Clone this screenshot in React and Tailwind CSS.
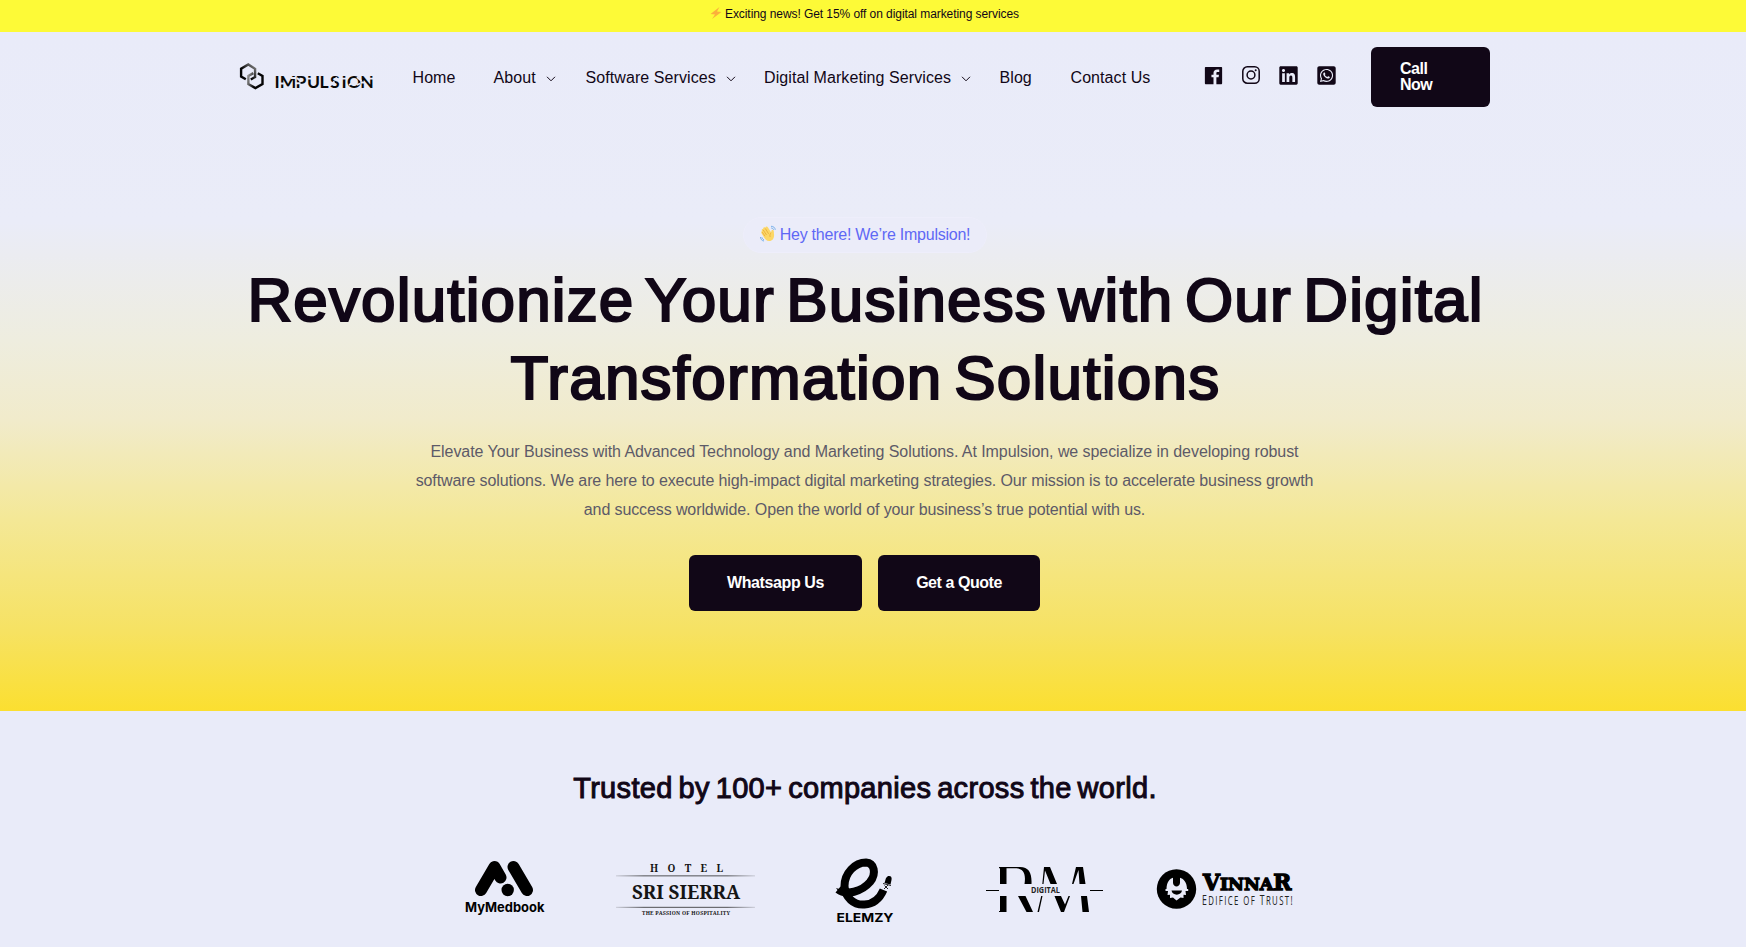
import { IoLogoFacebook } from "react-icons/io";
import { FaLinkedin, FaWhatsappSquare } from "react-icons/fa";

function Chevron() {
  return (
    <svg className="ml-[10px] mt-[2px] h-2 w-2.5 shrink-0" viewBox="0 0 10 8" fill="none" stroke="#110717" strokeWidth="1">
      <path d="M1 1.8 5 5.8 9 1.8" />
    </svg>
  );
}

function BrandLogo() {
  return (
    <svg className="h-8 w-[136px] shrink-0" viewBox="0 0 136 32">
      <defs>
        <linearGradient id="hexa" x1="0" y1="1" x2="1" y2="0">
          <stop offset="0.4" stopColor="#050505" />
          <stop offset="1" stopColor="#8a8a8a" />
        </linearGradient>
        <linearGradient id="hexb" x1="0" y1="0" x2="1" y2="0.3">
          <stop offset="0" stopColor="#9a9a9a" />
          <stop offset="0.6" stopColor="#050505" />
        </linearGradient>
      </defs>
      <g fill="none" strokeWidth="2.4" transform="translate(0.800 -0.500)">
        <path d="M6 18.8 1.3 16V8.3L8.500 4 15.300 8.300V16.500L11 19" stroke="url(#hexa)" />
        <path d="M13.500 12.600 8.500 15.500V23.500L15.600 27.600 22.700 23.500V15.500L18 12.800" stroke="url(#hexb)" />
      </g>
      <text x="35.500 40.800 56.500 68 80.500 91 102.500 108 121.200" y="26.800" fontSize="17.500" fontWeight="700" fontFamily="Lato, sans-serif" fill="#080808">IMPULSION</text>
      <g stroke="#e9ebf9" strokeWidth="1.900" fill="none">
        <path d="M41 22.500H45.500M52 17H57M56.500 22.300H61.500M58 17 62 20.500M68 17.600H73M91 24.500 95.500 20.500M96.500 16.500 100 19M102 17.600H107.500M110 24 114 21.500M118 16 122.500 20M118 24 121 22.500M121.500 21.500H126M129.500 17.600H135" />
      </g>
    </svg>
  );
}

function Instagram() {
  return (
    <svg className="h-[18px] w-[18px]" viewBox="0 0 18 18" fill="none" stroke="#110717" strokeWidth="1.5">
      <rect x="0.800" y="0.800" width="16.400" height="16.400" rx="4.500" />
      <circle cx="9" cy="9" r="3.900" />
      <circle cx="13.700" cy="4.300" r="1" fill="#110717" stroke="none" />
    </svg>
  );
}

function Wave() {
  return (
    <svg className="mb-[3px] mr-1 h-[17px] w-4 shrink-0" viewBox="0 0 16 16" fill="none">
      <path d="M2 5.600C1.200 4 2.200 3 3.200 3.600 3 2 4.300 1.300 5.300 2.200 5.800.700 7.300.700 8 2L11.200 7C11.300 5.300 11.500 4.200 12.700 4.200 14 4.400 13.800 6 14 8.500 14.500 12.500 12.500 15.600 9.200 15.500 6.500 15.400 5 13.600 3.800 11.500L1.500 7.700C.900 6.700 1.300 5.800 2 5.600Z" fill="#fcd766" />
      <path d="M3.200 4.500 6.500 9.500M5.300 3 8.600 8.300M2.300 6.700 5 10.700M11.200 7.200C10 8.400 9.500 10 10.200 11.500" stroke="#e2a233" strokeWidth="0.700" />
      <path d="M11 .800C13.300.700 15 2 15.300 4.300M11.200 2.500C12.500 2.500 13.300 3.200 13.700 4.300M.500 11.500C.600 13.700 1.700 15.200 4 15.500M1.900 11.800C2.100 13.100 2.800 13.900 4 14.200" stroke="#6aa9e9" strokeWidth="0.900" />
    </svg>
  );
}

function MyMedbook() {
  return (
    <svg className="h-16 w-[84px]" viewBox="463 857 84 64">
      <g stroke="#000" strokeWidth="12" strokeLinecap="round" strokeLinejoin="round" fill="none">
        <path d="M481 890 494.500 867 500.500 877.500M513.500 867 527 890" />
      </g>
      <circle cx="507.700" cy="890" r="6.200" />
      <text x="465" y="911.700" fontFamily="Inter, sans-serif" fontWeight="700" fontSize="13.500" textLength="79.500" lengthAdjust="spacingAndGlyphs">MyMedbook</text>
    </svg>
  );
}

function SriSierra() {
  return (
    <svg className="h-16 w-[142px]" viewBox="614 857 142 64">
      <defs>
        <linearGradient id="rule">
          <stop offset="0" stopColor="#222" stopOpacity="0.150" />
          <stop offset="0.200" stopColor="#222" stopOpacity="0.700" />
          <stop offset="0.800" stopColor="#222" stopOpacity="0.700" />
          <stop offset="1" stopColor="#222" stopOpacity="0.150" />
        </linearGradient>
      </defs>
      <g fontFamily="'Noto Serif', 'Liberation Serif', serif" fontWeight="700" fill="#151515">
        <text x="650" y="872" fontSize="10" textLength="73">HOTEL</text>
        <text x="632" y="898.500" fontSize="19.500" textLength="108" lengthAdjust="spacingAndGlyphs">SRI SIERRA</text>
        <text x="642" y="914.500" fontSize="5.200" textLength="88" lengthAdjust="spacing">THE PASSION OF HOSPITALITY</text>
      </g>
      <rect x="616" y="875.300" width="139" height="1.100" fill="url(#rule)" />
      <rect x="616" y="906.800" width="139" height="1.100" fill="url(#rule)" />
    </svg>
  );
}

function Elemzy() {
  return (
    <svg className="h-[68px] w-[60px]" viewBox="835 857 60 68">
      <path d="M838 889.500C846 896 862 891.500 870 882 877 873 874 863 866 862.500 855 862.500 844.500 873 844.500 886 845 897.500 854 905.500 864.500 904.500 874 904 880 898 883.500 890" fill="none" stroke="#000" strokeWidth="8" />
      <path d="M836 888 844 890.500 846 898 840.500 894Z" />
      <path d="M888 876C891 875.500 892 877 891.500 880L890.500 884.500 884.500 883 886 878Z" />
      <path d="M884.500 885.500 888 889M888 885 884 889M883 883.500 891 885.500" stroke="#222" strokeWidth="1" />
      <text x="836.500" y="921.700" fontFamily="Inter, sans-serif" fontWeight="700" fontSize="12" textLength="57" lengthAdjust="spacingAndGlyphs">ELEMZY</text>
    </svg>
  );
}

function RmDigital() {
  return (
    <svg className="h-16 w-[118px]" viewBox="986 857 118 64" fill="#000">
      <path d="M999 867H1020C1029 867 1032 873 1031.500 884H1024.500C1026 874 1024 868.200 1015 868.200H1006.500V884H1000V868.200H999Z" />
      <path d="M1000 896H1006.500V912H999V911H1000ZM1018 896H1025.500L1033 912H1026.500Z" />
      <path d="M1044 867H1050L1057 884H1050.500L1045 870.500 1043.500 884H1042.300ZM1076 867H1083L1085.500 884H1079.500L1078.500 870 1073.500 884H1072ZM1041.200 896H1042.500L1039 912H1037.500ZM1054.500 896H1061L1065 904.500 1068.500 896H1070L1064 912H1061ZM1081 896H1087L1089 912H1082.500Z" />
      <path d="M986 890H999V891H986ZM1090 890H1103V891H1090Z" />
      <text x="1031" y="892.700" fontFamily="'Open Sans', sans-serif" fontWeight="700" fontSize="8.200" textLength="29" lengthAdjust="spacingAndGlyphs" fill="#222">DIGITAL</text>
    </svg>
  );
}

function Vinnar() {
  return (
    <svg className="h-16 w-[138px]" viewBox="1156 857 138 64">
      <circle cx="1176.500" cy="889" r="19.700" />
      <path d="M1166.500 889C1166.500 882 1170 878.500 1173 877.800V883C1173.500 887.500 1179.500 887.500 1180 883V877.800C1183 878.500 1187 882 1187 889H1188.200V891H1165.500V889Z" fill="#e9ebf9" />
      <path d="M1168 891H1185.500L1186 895 1183.500 894.800 1183.500 898 1180.500 897.500 1176.500 900.500 1173 897.500 1170 898 1170 894.800 1167.500 895Z" fill="#e9ebf9" />
      <path d="M1171.500 890.500H1182C1181.500 896 1172 896 1171.500 890.500Z" />
      <text x="1203" y="889.500" fontFamily="'DejaVu Serif', serif" fontWeight="700" fontSize="17.500" textLength="88.500" lengthAdjust="spacingAndGlyphs" stroke="#000" strokeWidth="1.300">
        <tspan fontSize="22">V</tspan>INNA<tspan fontSize="22">R</tspan>
      </text>
      <g fontFamily="'Open Sans', sans-serif" fill="#222" transform="translate(1202 904.500) scale(0.600 1)">
        <text x="0" y="0" fontSize="14.500" textLength="151">E<tspan fontSize="13">DIFICE OF</tspan> T<tspan fontSize="13">RUST!</tspan></text>
      </g>
    </svg>
  );
}

const NAV = [
  { label: "Home", w: "w-[81px]" },
  { label: "About", w: "w-[92px]", menu: true },
  { label: "Software Services", w: "w-[178.500px]", menu: true },
  { label: "Digital Marketing Services", w: "w-[235.500px]", menu: true },
  { label: "Blog", w: "w-[71px]" },
  { label: "Contact Us", w: "w-[134px]" },
];

export default function App() {
  return (
    <div className="h-[947px] overflow-hidden bg-[#e9ebf9] font-['Liberation_Sans',sans-serif] text-[#110717]">
      <div className="flex h-8 items-start justify-center bg-[#fdfa37] pr-[17px] pt-[5px] text-xs leading-[18px]">
        <svg className="mr-[3px] mt-[2px] h-3 w-3" viewBox="0 0 12 12" fill="#fbb03b">
          <path d="M9.500 0 .500 7 5 7.500 2 12 11.500 5 7 4.500Z" />
        </svg>
        <span className="tracking-[-0.070px]">Exciting news! Get 15% off on digital marketing services</span>
      </div>
      <div className="h-[679px] bg-[linear-gradient(180deg,#e9ebf9_0px,#eaecf8_190px,#ebecf1_222px,#eeeddf_308px,#f1ebcb_388px,#f4e896_488px,#f6e263_598px,#fbdf30_679px)]">
        <header className="flex h-[90px] items-center pl-[239px] text-base">
          <BrandLogo />
          <nav className="ml-[37.500px] flex pt-px tracking-[0.080px]">
            {NAV.map((n) => (
              <div key={n.label} className={"flex shrink-0 items-center " + n.w}>
                <span className="whitespace-nowrap">{n.label}</span>
                {n.menu && <Chevron />}
              </div>
            ))}
          </nav>
          <div className="flex w-[166.500px] shrink-0 items-center gap-[19.500px] pb-1">
            <IoLogoFacebook size={23} className="-mx-[2.500px]" />
            <Instagram />
            <FaLinkedin size={21} className="-mx-[1.500px]" />
            <FaWhatsappSquare size={21} className="-mx-[1.500px]" />
          </div>
          <button className="flex h-[60px] w-[119px] shrink-0 items-center rounded-md bg-[#110717] pl-[29px] text-left font-bold leading-4 tracking-[-0.500px] text-white">
            <span className="w-10">Call Now</span>
          </button>
        </header>
        <main className="flex flex-col items-center pr-[17px] pt-[95px]">
          <div className="flex h-9 w-[244px] items-center justify-center rounded-full border border-[#eeeefb] bg-[#ebecf9] pl-px text-[#5f68f5]">
            <Wave />
            <span className="tracking-[-0.240px]">Hey there! We’re Impulsion!</span>
          </div>
          <h1 className="mt-2 whitespace-nowrap pl-0.5 text-center text-[62px] leading-[78px] [-webkit-text-stroke:2.200px_#110717] [word-spacing:-6.800px]">
            <span className="tracking-[1.140px]">Revolutionize Your Business with Our Digital</span>
            <br />
            <span className="tracking-[1.250px]">Transformation Solutions</span>
          </h1>
          <p className="mt-5 text-center leading-[29px] tracking-[-0.105px] text-[#5d5a68]">
            <span className="tracking-[-0.065px]">Elevate Your Business with Advanced Technology and Marketing Solutions. At Impulsion, we specialize in developing robust</span>
            <br />
            <span>software solutions. We are here to execute high-impact digital marketing strategies. Our mission is to accelerate business growth</span>
            <br />
            <span>and success worldwide. Open the world of your business’s true potential with us.</span>
          </p>
          <div className="mt-[31px] flex gap-4 font-bold text-white">
            <button className="h-14 w-[173px] rounded-md bg-[#110717] tracking-[-0.400px]">Whatsapp Us</button>
            <button className="h-14 w-[162px] rounded-md bg-[#110717] tracking-[-0.450px]">Get a Quote</button>
          </div>
        </main>
      </div>
      <section className="pt-[57px]">
        <h2 className="pr-4 text-center text-[29px] leading-10 tracking-[0.320px] [-webkit-text-stroke:1px_#110717] [word-spacing:-2.500px]">
          Trusted by 100+ companies across the world.
        </h2>
        <div className="flex w-full items-start pl-[463px] pt-[49px]">
          <MyMedbook />
          <div className="ml-[67px]"><SriSierra /></div>
          <div className="ml-[79px]"><Elemzy /></div>
          <div className="ml-[91px]"><RmDigital /></div>
          <div className="ml-[52px]"><Vinnar /></div>
        </div>
      </section>
    </div>
  );
}
